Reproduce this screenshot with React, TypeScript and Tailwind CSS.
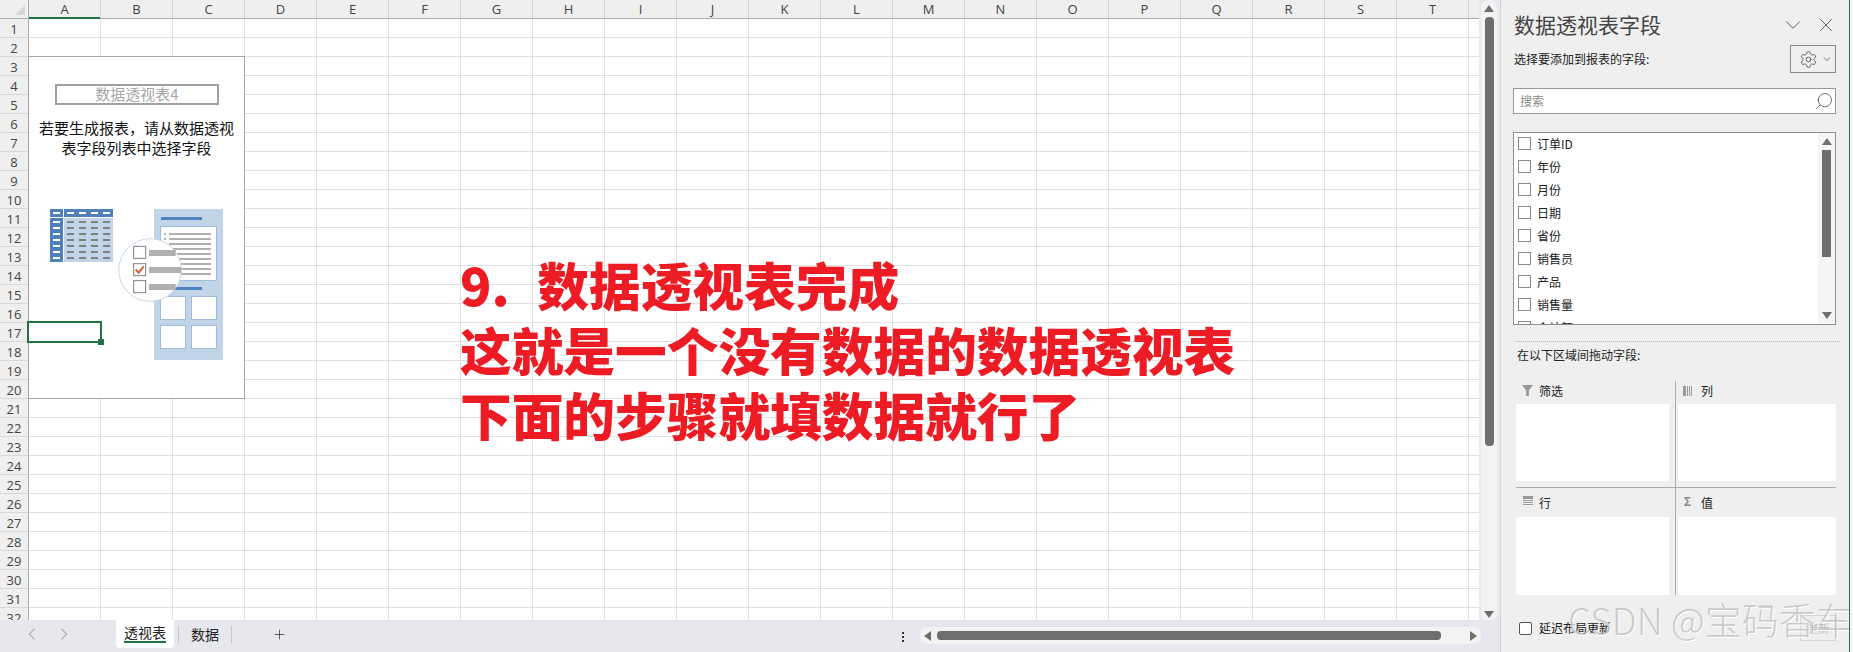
import { ChevronDown, Plus, Search, Settings, X } from 'lucide-react';
import type { ReactNode } from 'react';

const CJK = 'font-["Noto_Sans_CJK_SC","Liberation_Sans",sans-serif]';
const COLS = 'ABCDEFGHIJKLMNOPQRST'.split('');
const ROWS = Array.from({ length: 32 }, (_, i) => i + 1);
const FIELDS = ['订单ID', '年份', '月份', '日期', '省份', '销售员', '产品', '销售量', '合计额'];

function Triangle({ dir, className }: { dir: 'up' | 'down' | 'left' | 'right'; className?: string }) {
  const pts = { up: '0,7 5,0 10,7', down: '0,0 10,0 5,7', left: '7,0 7,10 0,5', right: '0,0 0,10 7,5' }[dir];
  const box = dir === 'up' || dir === 'down' ? '0 0 10 7' : '0 0 7 10';
  return (
    <svg viewBox={box} className={className}>
      <polygon points={pts} fill="#6e6e6e" />
    </svg>
  );
}

// placeholder art drawn in 3x units
function PivotArt() {
  const ys = [96, 114, 132, 150, 168, 186, 204];
  const xs = [201, 237, 273, 309];
  const lines = [132, 147, 162, 177, 192, 207, 222, 237, 252];
  const boxes = [[480, 318], [573, 318], [480, 405], [573, 405]];
  return (
    <svg viewBox="150 57 519 453" className="absolute left-[21px] top-[152px] w-[173px] h-[151px]">
      <rect x="150" y="57" width="39" height="24" fill="#4f81bd" />
      <rect x="192" y="57" width="147" height="24" fill="#4f81bd" />
      <rect x="150" y="84" width="39" height="132" fill="#4f81bd" />
      <rect x="192" y="84" width="147" height="132" fill="#c1d4e8" />
      <rect x="159" y="66" width="21" height="6" fill="#fff" />
      {xs.map(x => <rect key={x} x={x} y="66" width="21" height="6" fill="#fff" />)}
      {ys.map(y => (
        <g key={y}>
          <rect x="159" y={y - 3} width="21" height="6" fill="#fff" />
          {xs.map(x => <rect key={x} x={x} y={y - 3} width="21" height="6" fill="#808080" />)}
        </g>
      ))}
      <rect x="462" y="57" width="207" height="453" fill="#c1d4e8" />
      <rect x="483" y="81" width="123" height="9" fill="#4f81bd" />
      <rect x="481.500" y="109.500" width="168" height="162" fill="#fff" stroke="#9dbcdc" strokeWidth="3" />
      {lines.map(y => <rect key={y} x="507" y={y - 3} width="126" height="6" fill="#b0b0b0" />)}
      <rect x="492" y="129" width="6" height="6" fill="#b0b0b0" />
      <rect x="492" y="144" width="6" height="6" fill="#b0b0b0" />
      <rect x="483" y="291" width="123" height="9" fill="#4f81bd" />
      {boxes.map(([x, y]) => (
        <rect key={`${x}-${y}`} x={x + 1.5} y={y + 1.5} width="75" height="69" fill="#fff" stroke="#9dbcdc" strokeWidth="3" />
      ))}
      <circle cx="450" cy="240" r="94" fill="#fff" stroke="#c9d9ea" strokeWidth="3" />
      <rect x="447" y="180" width="80" height="18" fill="#b0b0b0" />
      <rect x="447" y="231" width="97" height="18" fill="#b0b0b0" />
      <rect x="447" y="282" width="80" height="18" fill="#b0b0b0" />
      {[168, 220, 271].map(y => (
        <rect key={y} x="401" y={y + 1} width="36" height="36" fill="#fff" stroke="#808080" strokeWidth="3" />
      ))}
      <path d="M407 238 L416 248 L431 229" fill="none" stroke="#d9603b" strokeWidth="6" />
    </svg>
  );
}

function Sheet() {
  return (
    <div className="relative w-[1479px] h-[620px] overflow-hidden bg-white">
      <div className="flex h-[19px] bg-[#efefef] border-b border-[#ababab]">
        <div className="relative w-[29px] shrink-0 border-r border-[#ababab]">
          <div className="absolute left-[15px] top-[5px] w-0 h-0 border-l-[10px] border-l-transparent border-b-[10px] border-b-[#d6d6d6]" />
        </div>
        {[...COLS, ''].map((c, i) => (
          <div
            key={c + i}
            className={`relative w-[72px] shrink-0 text-center text-[13px] leading-[19px] text-[#444] border-r border-[#d4d4d4] font-["Open_Sans",sans-serif]`}
          >
            {c}
            {c === 'A' && <div className="absolute left-0 right-0 bottom-[-1px] h-[2px] bg-[#217346]" />}
          </div>
        ))}
      </div>
      {ROWS.map(r => (
        <div key={r} className="flex h-[19px]">
          <div className={`w-[29px] shrink-0 bg-[#efefef] border-r border-b border-r-[#ababab] border-b-[#d8d8d8] text-center text-[13px] leading-[20px] text-[#444] font-["Open_Sans",sans-serif]`}>
            {r}
          </div>
          {[...COLS, ''].map((c, i) => (
            <div key={c + i} className="w-[72px] shrink-0 border-r border-b border-[#e0e0e0]" />
          ))}
        </div>
      ))}

      {/* empty pivot placeholder over the cells */}
      <div className={`absolute left-[28px] top-[56px] w-[217px] h-[343px] bg-white border border-[#a6a6a6] ${CJK}`}>
        <div className="absolute left-[26px] top-[27px] w-[164px] h-[21px] border-2 border-[#a0a0a0] text-center text-[15px] leading-[15px] text-[#a6a6a6]">
          数据透视表4
        </div>
        <div className="absolute left-0 right-0 top-[61px] text-center text-[15px] leading-[20px] text-[#111]">
          若要生成报表，请从数据透视
          <br />
          表字段列表中选择字段
        </div>
        <PivotArt />
      </div>

      {/* selected cell */}
      <div className="absolute left-[27px] top-[321px] w-[75px] h-[22px] border-2 border-[#217346]">
        <div className="absolute right-[-4px] bottom-[-4px] w-[6px] h-[6px] bg-[#217346] border-0" />
      </div>

      {/* annotation */}
      <div className={`absolute left-[460px] top-[251px] whitespace-nowrap text-[51.700px] leading-[65px] font-black text-[#ed1c24] ${CJK}`}>
        <div>9.&nbsp;&nbsp;<span className="ml-[4px]">数据透视表完成</span></div>
        <div>这就是一个没有数据的数据透视表</div>
        <div>下面的步骤就填数据就行了</div>
      </div>
    </div>
  );
}

function SheetBar() {
  return (
    <div className={`relative flex items-start h-[32px] bg-[#e6e8ee] ${CJK}`}>
      <div className="flex items-center h-[28px] w-[116px] shrink-0 pl-[26px] gap-[20px] text-[#a0a0a0]">
        <svg viewBox="0 0 12 16" className="w-[12px] h-[14px]"><path d="M9 2 L3 8 L9 14" fill="none" stroke="currentColor" strokeWidth="1.200" /></svg>
        <svg viewBox="0 0 12 16" className="w-[12px] h-[14px]"><path d="M3 2 L9 8 L3 14" fill="none" stroke="currentColor" strokeWidth="1.200" /></svg>
      </div>
      <div className="w-[58px] h-[28px] bg-white rounded-b-[4px] text-center text-[14px] leading-[24px] text-[#222]">
        <div className="inline-block w-[42px] h-[23px] border-b-2 border-[#217346]">透视表</div>
      </div>
      <div className="flex items-center h-[28px]">
        <div className="ml-[4px] w-px h-[17px] bg-[#c4c6cc]" />
        <div className="w-[52px] text-center text-[14px] text-[#222]">数据</div>
        <div className="w-px h-[17px] bg-[#c4c6cc]" />
        <Plus size={15} strokeWidth={1.200} className="ml-[40px] text-[#333]" />
      </div>
      <div className="absolute left-[902px] top-[12px] flex flex-col gap-[2px]">
        <div className="w-[2px] h-[2px] bg-[#333]" />
        <div className="w-[2px] h-[2px] bg-[#333]" />
        <div className="w-[2px] h-[2px] bg-[#333]" />
      </div>
      <div className="absolute left-[920px] top-[7px] w-[561px] h-[17px] bg-[#f3f3f3] rounded-[8px] flex items-center justify-between px-[4px]">
        <Triangle dir="left" className="w-[7px] h-[10px]" />
        <div className="absolute left-[17px] top-[4px] w-[504px] h-[9px] rounded-[4px] bg-[#6e6e6e]" />
        <Triangle dir="right" className="w-[7px] h-[10px]" />
      </div>
    </div>
  );
}

function VScroll() {
  return (
    <div className="relative w-[21px] h-[620px] pl-[2px]">
      <div className="relative w-[16px] h-[622px] bg-[#f3f3f3] rounded-[8px]">
        <Triangle dir="up" className="absolute left-[3px] top-[5px] w-[10px] h-[7px]" />
        <div className="absolute left-[4px] top-[17px] w-[9px] h-[429px] rounded-[4px] bg-[#6e6e6e]" />
        <Triangle dir="down" className="absolute left-[3px] top-[611px] w-[10px] h-[7px]" />
      </div>
    </div>
  );
}

function AreaHead({ icon, label, h }: { icon: ReactNode; label: string; h: string }) {
  return (
    <div className={`flex items-center text-[12px] text-[#222] ${h}`}>
      <div className="w-[23px] flex justify-center">{icon}</div>
      <span>{label}</span>
    </div>
  );
}

function FieldPanel() {
  return (
    <div className={`relative w-[350px] h-[652px] bg-[#efefef] border-l border-[#ced4de] pl-[12px] pr-[14px] ${CJK}`}>
      <div className="flex items-center justify-between h-[45px] pt-[5px] pl-[1px]">
        <span className="text-[21px] text-[#444]">数据透视表字段</span>
        <div className="flex items-center gap-[9px] mr-[-1px] text-[#444]">
          <ChevronDown size={26} strokeWidth={0.800} />
          <X size={22} strokeWidth={0.900} />
        </div>
      </div>
      <div className="flex items-center justify-between h-[28px] pl-[1px]">
        <span className="text-[12px] text-[#222]">选择要添加到报表的字段:</span>
        <div className="flex items-center gap-[3px] w-[46px] h-[28px] pl-[8px] border border-[#8a8a8a] text-[#444]">
          <Settings size={19} strokeWidth={1} />
          <ChevronDown size={12} strokeWidth={1.500} />
        </div>
      </div>
      <div className="flex items-center justify-between mt-[15px] h-[26px] bg-white border border-[#999] pl-[6px] pr-[1px]">
        <span className="text-[12px] text-[#8a8a8a]">搜索</span>
        <Search size={20} strokeWidth={0.900} className="-scale-x-100 text-[#444]" />
      </div>
      <div className="relative mt-[18px] h-[193px] bg-white border border-[#8f8f8f] overflow-hidden">
        <div className="pl-[4px]">
          {FIELDS.map(f => (
            <div key={f} className="flex items-center gap-[6px] h-[23px] pb-[1px] text-[12px] text-[#222]">
              <div className="w-[13px] h-[13px] mt-[-1px] border border-[#8a8a8a] bg-white" />
              <span>{f}</span>
            </div>
          ))}
        </div>
        <div className="absolute right-0 top-0 bottom-0 w-[17px] bg-[#f5f5f5]">
          <Triangle dir="up" className="absolute left-[4px] top-[5px] w-[10px] h-[7px]" />
          <div className="absolute left-[4px] top-[17px] w-[9px] h-[107px] bg-[#6e6e6e]" />
          <Triangle dir="down" className="absolute left-[4px] bottom-[5px] w-[10px] h-[7px]" />
        </div>
      </div>
      <div className="mt-[16px] mr-[-4px] ml-[2px] border-t border-dotted border-[#b5b5b5]" />
      <div className="h-[20px] mt-[3px] pl-[4px] text-[12px] leading-[20px] text-[#222]">在以下区域间拖动字段:</div>

      <div className="flex flex-col mt-[16px] ml-[3px]">
        <div className="flex h-[107px] border-b border-[#ababab]">
          <div className="w-[160px] border-r border-[#ababab]">
            <AreaHead
              h="h-[23px] pb-[3px]"
              label="筛选"
              icon={<svg viewBox="0 0 12 12" className="w-[11px] h-[11px] mt-[-1px] ml-[-1px]"><path d="M0 0 H12 L7.500 6 V12 H4.500 V6 Z" fill="#999" /></svg>}
            />
            <div className="w-[153px] h-[77px] bg-white" />
          </div>
          <div className="flex-1 pl-[2px]">
            <AreaHead
              h="h-[23px] pb-[3px]"
              label="列"
              icon={<svg viewBox="0 0 10 10" className="w-[10px] h-[10px] mt-[-1px] ml-[-4px]"><path d="M0 0H3V10H0ZM4 0H5V10H4ZM6 0H7V10H6ZM8 0H9V10H8Z" fill="#999" /></svg>}
            />
            <div className="h-[77px] bg-white" />
          </div>
        </div>
        <div className="flex h-[107px]">
          <div className="w-[160px] border-r border-[#ababab]">
            <AreaHead
              h="h-[29px]"
              label="行"
              icon={<svg viewBox="0 0 10 10" className="w-[10px] h-[10px] mt-[-3px]"><path d="M0 0H10V3H0ZM0 4H10V5H0ZM0 6H10V7H0ZM0 8H10V9H0Z" fill="#999" /></svg>}
            />
            <div className="w-[153px] h-[78px] bg-white" />
          </div>
          <div className="flex-1 pl-[2px]">
            <AreaHead
              h="h-[29px]"
              label="值"
              icon={<span className="mt-[-4px] ml-[-4px] text-[12px] leading-none font-bold text-[#8c8c8c]">Σ</span>}
            />
            <div className="h-[78px] bg-white" />
          </div>
        </div>
      </div>

      <div className="flex items-center justify-between mt-[20px] h-[26px]">
        <div className="flex items-center gap-[7px] ml-[6px] text-[12px] text-[#222]">
          <div className="w-[13px] h-[13px] border border-[#555] rounded-[2px] bg-white" />
          <span>延迟布局更新</span>
        </div>
        <div className="w-[36px] h-[26px] border border-[#d4d4d4] text-center text-[11px] leading-[24px] text-[#b8b8b8]">更新</div>
      </div>

      {/* csdn watermark */}
      <div className="absolute left-[67px] top-[597px] whitespace-nowrap text-[37px] leading-[44px] font-light text-[#bdbdbd]/75 [text-shadow:1px_1px_0_#fff] pointer-events-none">
        CSDN @宝码香车
      </div>
      <div className="absolute right-0 top-0 bottom-0 w-px bg-[#217346]" />
    </div>
  );
}

export default function App() {
  return (
    <div className="flex w-[1853px] h-[652px] overflow-hidden bg-[#f4f4f4]">
      <div className="w-[1500px] shrink-0 bg-[#e6e8ee]">
        <div className="flex h-[620px]">
          <Sheet />
          <VScroll />
        </div>
        <SheetBar />
      </div>
      <FieldPanel />
    </div>
  );
}
